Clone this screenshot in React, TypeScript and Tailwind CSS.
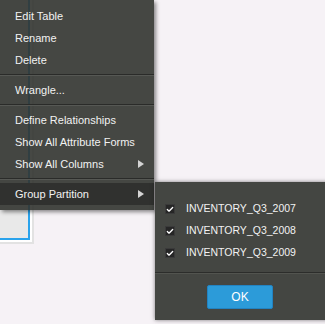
import { Check } from 'lucide-react';

const font = { fontFamily: '"Liberation Sans", Arial, sans-serif' };

function Separator() {
    return <div className="my-[3px] border-t border-b border-t-[#2a2b29] border-b-[#565854]" />;
}

function Item({ label, arrow, active }: { label: string; arrow?: boolean; active?: boolean }) {
    return (
        <div
            className={`flex items-center justify-between h-[22px] pl-[15px] pr-[10px] text-[11px] text-[#f2f2f2] ${active ? 'bg-[#30312f]' : ''}`}
        >
            <span>{label}</span>
            {arrow && (
                <svg width="6" height="8" viewBox="0 0 6 8">
                    <polygon points="0,0 6,4 0,8" fill="#d4d4d4" />
                </svg>
            )}
        </div>
    );
}

const partitions = ['INVENTORY_Q3_2007', 'INVENTORY_Q3_2008', 'INVENTORY_Q3_2009'];

export default function App() {
    return (
        <div className="relative w-[325px] h-[324px] overflow-hidden bg-[#f6f2f6]" style={font}>
            {/* table card behind the menu */}
            <div className="absolute left-[-40px] top-[-20px] w-[74px] h-[264px] border-2 border-[#e2e2e2] bg-white p-[2px]">
                <div className="w-full h-full border-2 border-[#2aa3ec] bg-[#e9e9e9]" />
            </div>

            {/* context menu */}
            <div className="absolute left-0 top-0 w-[154px] pt-[5px] pb-[5px] bg-[rgba(50,52,48,0.9)] shadow-[2px_2px_4px_rgba(0,0,0,0.45)]">
                <Item label="Edit Table" />
                <Item label="Rename" />
                <Item label="Delete" />
                <Separator />
                <Item label="Wrangle..." />
                <Separator />
                <Item label="Define Relationships" />
                <Item label="Show All Attribute Forms" />
                <Item label="Show All Columns" arrow />
                <Separator />
                <Item label="Group Partition" arrow active />
            </div>

            {/* group partition submenu */}
            <div className="absolute left-[155px] top-[182px] w-[175px] h-[138px] pt-[16px] bg-[#444642] shadow-[0_0_4px_rgba(0,0,0,0.5)]">
                {partitions.map((p) => (
                    <div key={p} className="flex items-center h-[22px] pl-[10px] text-[10.5px] text-[#f2f2f2]">
                        <div className="flex items-center justify-center w-[10px] h-[10px] bg-[#262626] border border-[#3a3a3a]">
                            <Check size={9} strokeWidth={4} color="#ffffff" />
                        </div>
                        <span className="ml-[11px]">{p}</span>
                    </div>
                ))}
                <div className="mt-[8px] border-t border-b border-t-[#2c2d2b] border-b-[#52544f]" />
                <div className="mt-[10px] ml-[52px]">
                    <button className="w-[66px] h-[24px] bg-[#2c9bd9] border border-[#2283c2] rounded-[2px] text-[12px] text-white">
                        OK
                    </button>
                </div>
            </div>
        </div>
    );
}
